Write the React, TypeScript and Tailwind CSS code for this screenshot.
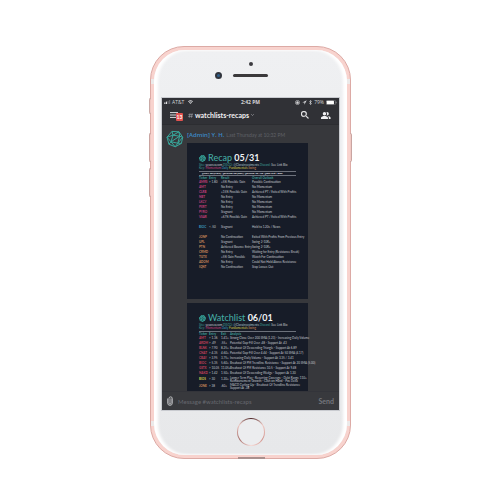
import React from "react";

type Row = { tag: string; color: string; cells: string[]; gap?: boolean; tall?: boolean };

const PINK = "text-[#c9407f]";
const BLUE = "text-[#3d9cc4]";
const ORANGE = "text-[#d08a5c]";
const YELLOW = "text-[#d3c94f]";
const RED = "text-[#c8415c]";

const recapRows: Row[] = [
  { tag: "AMRS", color: PINK, cells: ["> 1.80", "+5% Possible Gain", "Possible Continuation"] },
  { tag: "AMT", color: PINK, cells: ["", "No Entry", "No Momentum"] },
  { tag: "CLRB", color: PINK, cells: ["", "+15% Possible Gain", "Achieved PT / Exited With Profits"] },
  { tag: "NBT", color: PINK, cells: ["", "No Entry", "No Momentum"] },
  { tag: "LKCY", color: PINK, cells: ["", "No Entry", "No Momentum"] },
  { tag: "PXRT", color: PINK, cells: ["", "No Entry", "No Momentum"] },
  { tag: "PYRO", color: PINK, cells: ["", "Stagnant", "No Momentum"] },
  { tag: "VSAR", color: PINK, cells: ["", "+67% Possible Gain", "Achieved PT / Exited With Profits"] },
  { tag: "BIOC", color: BLUE, gap: true, cells: ["< .50", "Stagnant", "Hold to 1.20s / News"] },
  { tag: "JONP", color: ORANGE, gap: true, cells: ["", "No Continuation", "Exited With Profits From Previous Entry"] },
  { tag: "UPL", color: ORANGE, cells: ["", "Stagnant", "Swing 2-10R+"] },
  { tag: "PTN", color: ORANGE, cells: ["", "Achieved Bounce Entry", "Swing 2-10R+"] },
  { tag: "CRMD", color: ORANGE, cells: ["", "No Entry", "Waiting for Entry (Resistance Break)"] },
  { tag: "TGTX", color: ORANGE, cells: ["", "+5% Gain Possible", "Watch For Continuation"] },
  { tag: "ADOM", color: ORANGE, cells: ["", "No Entry", "Could Not Hold Above Resistance"] },
  { tag: "IQNT", color: ORANGE, cells: ["", "No Continuation", "Stop Losses Out"] },
];

const watchRows: Row[] = [
  { tag: "AMT", color: RED, cells: ["> 1.36", "1.41+", "Strong Close Over 200 SMA (1.23) - Increasing Daily Volume"] },
  { tag: "ARDM", color: RED, cells: ["> .49", ".55+", "Potential Gap-Fill Over .48 - Support At .43"] },
  { tag: "BLNK", color: RED, cells: ["> 7.90", "8.25+", "Breakout Of Descending Triangle - Support At 6.89"] },
  { tag: "CNAT", color: RED, cells: ["> 4.35", "4.60+", "Potential Gap-Fill Over 4.44 - Support At 50 SMA (4.17)"] },
  { tag: "CBAY", color: RED, cells: ["> 3.95", "3.75+", "Increasing Daily Volume - Support At 3.35 / 3.41"] },
  { tag: "BIOC", color: RED, cells: ["> 5.35", "5.60+", "Breakout Of PM Trendline Resistance - Support At 20 SMA (5.00)"] },
  { tag: "GSTX", color: RED, cells: ["> 10.05", "11.05+", "Breakout Of PM Resistance 10.5 - Support At 9.48"] },
  { tag: "NAKD", color: RED, cells: ["> 1.42", "1.50+", "Breakout Of Descending Wedge - Support At 1.30"] },
  { tag: "BIOS", color: YELLOW, tall: true, cells: ["> 30", "1.20+", "Longer Term Play - Recurring Coverage - Debt Range 110+\nReimbursement Growth - Cash on Hand - Pos Delta"] },
  { tag: "JONE", color: ORANGE, tall: true, cells: ["> 38", ".60+", "MACD Curling Up - Breakout Of Trendline Resistance\nSupport At .38"] },
];

function Polyhedron({ className, weight = 1 }: { className: string; weight?: number }) {
  return (
    <svg viewBox="0 0 18 18" className={className} fill="none" stroke="#38a69b" strokeWidth={weight} strokeLinejoin="round">
      <path d="M6 1.4 13 1.8 16.7 7.3 15.4 13.4 9.2 16.8 2.9 14.2 1 7.2Z" />
      <path d="M6 1.4 7 5.2 1 7.2 5 11.8 7 5.2 13.6 6.2 5 11.8 11.8 13.2 13.6 6.2 13 1.8 7 5.2M13.6 6.2 16.7 7.3 11.8 13.2 15.4 13.4M11.8 13.2 9.2 16.8 5 11.8 2.9 14.2" />
    </svg>
  );
}

function CardHead({ title, date }: { title: string; date: string }) {
  return (
    <>
      <h2 className="flex h-3 items-center font-['Lato',sans-serif] text-[9px] font-medium leading-3 text-[#44aaa2]">
        <Polyhedron weight={2} className="mr-0.5 size-[7px]" />
        <span className="whitespace-pre">{title} </span>
        <span className="font-bold text-[#f1f3f6]">{date}</span>
      </h2>
      <p className="whitespace-nowrap text-[#3f9f98]">
        Site: <a href="#site" className="text-[#c6cbd2]">yesoreo.com</a> DISCO:{" "}
        <a href="#contact" className="text-[#a9c4cd]">@Clorainvestments</a> Discord:{" "}
        <a href="#bio" className="text-[#c6cbd2]">See Link Bio</a>
      </p>
      <p className="text-[#3f9f98]">
        Key: <span className={PINK}>Momentum</span> <span className={BLUE}>Daily</span>{" "}
        <span className={YELLOW}>Fundamentals</span> <span className={ORANGE}>Swing</span>
      </p>
    </>
  );
}

function DataTable({ heads, widths, rows }: { heads: string[]; widths: string[]; rows: Row[] }) {
  return (
    <table className="w-full table-fixed border-collapse whitespace-pre text-left text-[#c3c7ce]">
      <colgroup>
        {widths.map((w, i) => (
          <col key={i} className={w} />
        ))}
      </colgroup>
      <thead className="text-[#3f9f98]">
        <tr className="h-1">
          {heads.map((h) => (
            <th key={h} className="p-0 font-bold">{h}</th>
          ))}
        </tr>
      </thead>
      <tbody>
        {rows.map((r) => (
          <React.Fragment key={r.tag}>
            {r.gap && <tr className="h-[5px]"><td className="p-0" colSpan={heads.length} /></tr>}
            <tr className={r.tall ? "h-[7px]" : "h-[5px]"}>
              <th scope="row" className={`p-0 font-bold ${r.color}`}>{r.tag}</th>
              {r.cells.map((c, i) => (
                <td key={i} className="p-0">{c}</td>
              ))}
            </tr>
          </React.Fragment>
        ))}
      </tbody>
    </table>
  );
}

function StatusBar() {
  return (
    <div className="flex h-2 items-center px-0.5 font-['Open_Sans',sans-serif] text-[5px] font-medium leading-none text-[#d4d5d8]">
      <div className="flex flex-1 items-center gap-px">
        <svg viewBox="0 0 8 5" className="h-1 w-[7px]" fill="#e4e4e6">
          <rect y="3" width="1.4" height="2" />
          <rect x="2" y="2" width="1.4" height="3" />
          <rect x="4" y="1" width="1.4" height="4" fill="#66686e" />
          <rect x="6" width="1.4" height="5" fill="#66686e" />
        </svg>
        <span>AT&amp;T</span>
        <svg viewBox="0 0 10 8" className="ml-[3px] h-1 w-[5px]" fill="none" stroke="currentColor" strokeWidth="2">
          <path d="M.5 3Q5-1 9.5 3M2.4 5Q5 2.8 7.6 5" />
          <circle cx="5" cy="6.8" r=".5" />
        </svg>
      </div>
      <time className="font-bold">2:42 PM</time>
      <div className="flex flex-1 items-center justify-end gap-0.5">
        <svg viewBox="0 0 10 10" className="size-[5px]" fill="none" stroke="currentColor" strokeWidth="1.2">
          <circle cx="5" cy="5" r="4.2" />
          <rect x="3.4" y="4.5" width="3.2" height="2.5" fill="currentColor" />
          <path d="M4 4.5V3.2h2v1.3" />
        </svg>
        <svg viewBox="0 0 10 10" className="size-[5px]" fill="currentColor">
          <path d="M9.5.5.5 5h4.3v4.5z" />
        </svg>
        <svg viewBox="0 0 6 10" className="h-[5px] w-[3px]" fill="none" stroke="currentColor" strokeWidth="1.3">
          <path d="M.5 2.6 5 7.2 3 9.4V.6l2 2.2L.5 7.4" />
        </svg>
        <span>79%</span>
        <svg viewBox="0 0 22 10" className="h-[5px] w-[11px]">
          <rect x=".6" y=".6" width="18.5" height="8.8" rx="2" fill="none" stroke="#8d8e93" />
          <rect x="1.4" y="1.4" width="14.5" height="7.2" rx="1.2" fill="#fff" />
          <path d="M20.4 3.4v3.2" stroke="#8d8e93" strokeWidth="1.6" />
        </svg>
      </div>
    </div>
  );
}

function NavBar() {
  return (
    <header className="flex h-[19px] items-center border-b border-[#2c2d31] px-2">
      <button aria-label="Open channels" className="relative flex h-3 w-4 items-center">
        <svg viewBox="0 0 8 6" className="h-1.5 w-2" stroke="#dcdde0" strokeWidth="1">
          <path d="M0 .6h8M0 3h8M0 5.4h8" />
        </svg>
        <span className="absolute left-1.5 top-1 flex h-2 w-[7px] items-center justify-center rounded-[1px] bg-[#e2524f] text-[5px] font-bold leading-none text-white">13</span>
      </button>
      <h1 className="ml-0.5 flex flex-1 items-center gap-0.5 text-[7px] font-bold leading-none text-[#f0f0f2]">
        <svg viewBox="0 0 10 10" className="size-[5px]" fill="none" stroke="#9a9ca2" strokeWidth="1.3">
          <path d="M4 .5 2.5 9.5M8.3.5 6.8 9.5M.8 3.2h9M.2 6.8h9" />
        </svg>
        <span>watchlists-recaps</span>
        <svg viewBox="0 0 6 4" className="h-0.5 w-[3px]" fill="none" stroke="#a5a7ac" strokeWidth="1.4">
          <path d="m.5.5 2.5 2.5L5.5.5" />
        </svg>
      </h1>
      <button aria-label="Search" className="mr-3">
        <svg viewBox="3 3 18 18" className="size-2" fill="#f1f1f3" stroke="#f1f1f3" strokeWidth="0.5">
          <path d="M15.5 14h-.79l-.28-.27A6.47 6.47 0 0 0 16 9.5 6.5 6.5 0 1 0 9.5 16c1.61 0 3.09-.59 4.23-1.57l.27.28v.79l5 4.99L20.49 19l-4.99-5zm-6 0a4.5 4.5 0 1 1 0-9 4.5 4.5 0 0 1 0 9z" />
        </svg>
      </button>
      <button aria-label="Members">
        <svg viewBox="1 4 23 16" className="h-[7px] w-[10px]" fill="#f1f1f3">
          <path d="M16.67 13.13C18.04 14.06 19 15.32 19 17v3h4v-3c0-2.18-3.57-3.47-6.33-3.87zM15 12a4 4 0 1 0 0-8c-.47 0-.91.1-1.33.24a5.98 5.98 0 0 1 0 7.52c.42.14.86.24 1.33.24z" />
          <path d="M9 12a4 4 0 1 0 0-8 4 4 0 0 0 0 8zm0 1c-2.67 0-8 1.34-8 4v3h16v-3c0-2.66-5.33-4-8-4z" />
        </svg>
      </button>
    </header>
  );
}

export default function App() {
  return (
    <main className="flex min-h-screen items-start justify-center bg-white pb-10 pt-[46px] font-['Lato','Open_Sans',sans-serif]">
      <div className="relative ml-px w-[201px] rounded-[34px] border border-[#dcaaa5] bg-[#f8d3ce] p-[3px]">
        <span className="absolute -left-0.5 top-[51px] h-4 w-0.5 rounded-l-sm border border-r-0 border-[#c9aaa6] bg-[#f1c9c4]" />
        <span className="absolute -left-0.5 top-[86px] h-[29px] w-0.5 rounded-l-sm border border-r-0 border-[#c9a5a1] bg-[#f1c9c4]" />
        <span className="absolute -left-0.5 top-[121px] h-[29px] w-0.5 rounded-l-sm border border-r-0 border-[#c9a5a1] bg-[#f1c9c4]" />
        <span className="absolute -right-0.5 top-[86px] h-[29px] w-0.5 rounded-r-sm border border-l-0 border-[#c9a5a1] bg-[#f1c9c4]" />
        <span className="absolute inset-x-0 top-8 h-[5px] border-x-3 border-[#eceaea]" />
        <span className="absolute inset-x-0 bottom-8 h-[5px] border-x-3 border-[#eceaea]" />
        <span className="absolute -bottom-px left-[87px] h-0.5 w-[27px] bg-[#a98f8d]" />
        <div className="relative rounded-[31px] bg-linear-to-b from-[#eff0f2] to-[#e7e8ea] px-2 shadow-[inset_4px_0_3px_#ffffff,inset_-4px_0_3px_#ffffff]">
          <div className="flex h-12 flex-col items-center pt-3">
            <span className="size-1 rounded-full bg-[#3c3b40]" />
            <div className="mt-1.5 flex items-center gap-[11px] pr-[18px]">
              <span className="size-[7px] rounded-full border-2 border-[#30343d] bg-[#315f8a]" />
              <span className="h-[3px] w-[35px] rounded-full bg-[#3b393b]" />
            </div>
          </div>
          <div className="bg-[#37383c] outline outline-[#c9cbd0]">
            <div className="bg-[#303136]">
              <StatusBar />
              <NavBar />
            </div>
            <section className="flex h-[266px] gap-[3px] pl-1 pt-[5px]">
              <Polyhedron className="size-[18px] shrink-0" />
              <article className="min-w-0 flex-1">
                <p className="flex h-[13px] items-start gap-0.5 text-[6px] leading-[10px]">
                  <strong className="font-['Open_Sans',sans-serif] font-semibold text-[#3c88c6]">[Admin] Y. H.</strong>
                  <time className="text-[5px] text-[#5f6167]">Last Thursday at 10:32 PM</time>
                </p>
                <div className="mr-[31px] h-[156px] bg-[#171c28] pl-3 pt-[9px] font-['Liberation_Sans_Narrow','Lato',sans-serif] text-[3px] leading-[3px]">
                  <CardHead title="Recap" date="05/31" />
                  <p className="mr-3 mt-px h-[5px] whitespace-nowrap border-y border-[#6c717b] pl-[3px] font-['Open_Sans',sans-serif] text-[2px] font-bold text-[#f4f5f8]">
                    $LUNA: 250 (5.96%) - $MARUSD: 2M (3M%) - $BATUSD: 1M / 7M - $XBR: is at + 260%
                  </p>
                  <DataTable
                    heads={["Ticker", "Entry", "Result", "Overall Outlook"]}
                    widths={["w-[10px]", "w-[12px]", "w-[31px]", "w-auto"]}
                    rows={recapRows}
                  />
                </div>
                <div className="mr-[31px] mt-1 h-[88px] bg-[#171c28] pl-3 pt-[9px] font-['Liberation_Sans_Narrow','Lato',sans-serif] text-[3px] leading-[3px]">
                  <CardHead title="Watchlist" date="06/01" />
                  <div className="mr-3 mt-px border-t border-[#6c717b]" />
                  <DataTable
                    heads={["Ticker", "Entry", "Exit", "Analysis"]}
                    widths={["w-[10px]", "w-[12px]", "w-[9px]", "w-auto"]}
                    rows={watchRows}
                  />
                </div>
              </article>
            </section>
            <form className="flex h-[19px] items-center border-t border-[#33343a] bg-[#38393d] px-[5px] text-[7px] leading-none">
              <button type="button" aria-label="Attach file">
                <svg viewBox="0 0 8 14" className="h-[10px] w-1.5" fill="none" stroke="#cfd0d3" strokeWidth="1.2" strokeLinecap="round">
                  <path d="M5.4 3.8v6.1a1.4 1.4 0 0 1-2.8 0V3.5a2.3 2.3 0 0 1 4.6 0v6.4a3.2 3.2 0 0 1-6.4 0V4" />
                </svg>
              </button>
              <input
                aria-label="Message"
                placeholder="Message #watchlists-recaps"
                className="ml-[5px] min-w-0 flex-1 bg-transparent text-[6px] text-[#d0d1d4] outline-none placeholder:text-[#66686f]"
              />
              <button type="submit" className="font-bold text-[#74767c]">Send</button>
            </form>
          </div>
          <div className="flex h-[45px] items-start justify-center pt-2">
            <button
              aria-label="Home"
              className="size-7 rounded-full bg-[conic-gradient(#4d2628,#efc9c3,#d1928b,#f7dcd8,#a56b67,#efc9c3,#4d2628)] p-px"
            >
              <span className="block size-full rounded-full bg-[#ecedef]" />
            </button>
          </div>
        </div>
      </div>
    </main>
  );
}
